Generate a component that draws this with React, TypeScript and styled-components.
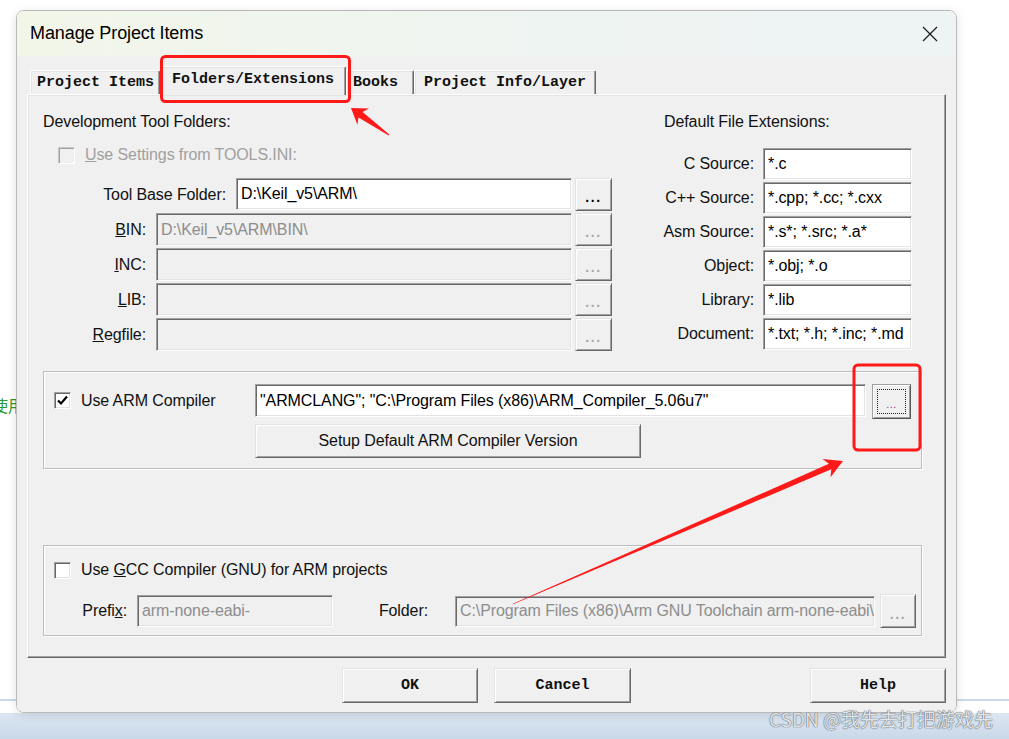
import React from "react";
import styled, { createGlobalStyle, css } from "styled-components";

const GlobalStyle = createGlobalStyle`
  html, body { margin: 0; padding: 0; background: #fff; }
  body { font-family: "Liberation Sans", Arial, sans-serif; }
  * { box-sizing: border-box; }
`;

const raised = css`
  border: 1px solid;
  border-color: #e3e3e3 #696969 #696969 #e3e3e3;
  box-shadow: inset 1px 1px 0 #fff, inset -1px -1px 0 #a0a0a0;
  background: #f0f0f0;
`;

const sunken = css`
  border: 1px solid;
  border-color: #a0a0a0 #fff #fff #a0a0a0;
  box-shadow: inset 1px 1px 0 #696969, inset -1px -1px 0 #e3e3e3;
`;

const uiFont = css`
  font-family: "Liberation Sans", Arial, sans-serif;
  font-size: 16px;
  letter-spacing: -0.1px;
  line-height: 20px;
`;

const Desktop = styled.div`
  position: relative;
  width: 1009px;
  height: 739px;
  overflow: hidden;
  display: flex;
  flex-direction: column;
  background: #fff;
`;

const Backdrop = styled.div`
  flex: 1;
  background: #fff;
`;

const BackEdge = styled.div`
  height: 2px;
  margin-bottom: 12px;
  background: #c9d8ea;
`;

const Taskbar = styled.div`
  height: 26px;
  background: linear-gradient(#dbe6f2, #c9d8e9);
`;

const StrayText = styled.span`
  position: absolute;
  left: -8px;
  top: 393px;
  font-family: "Noto Sans CJK SC", sans-serif;
  font-size: 16px;
  color: #2a9a2a;
`;

const Watermark = styled.div`
  position: absolute;
  right: 16px;
  top: 706px;
  z-index: 5;
  font-family: "Noto Sans CJK SC", "Liberation Sans", sans-serif;
  font-size: 19px;
  line-height: 26px;
  color: #e2e5e8;
  text-shadow: 0 0 1px #50555b, 0 0 1px #50555b;
`;

const Dialog = styled.div`
  position: absolute;
  left: 16px;
  top: 10px;
  width: 941px;
  height: 703px;
  z-index: 2;
  display: flex;
  flex-direction: column;
  border: 1px solid #b9b9b9;
  border-radius: 8px;
  overflow: hidden;
  box-shadow: 0 2px 10px rgba(0, 0, 0, 0.12);
`;

const TitleBar = styled.div`
  height: 45px;
  display: flex;
  align-items: center;
  padding-left: 13px;
  background: linear-gradient(90deg, #f2f6e9, #eef4f2 60%, #eef3f4);
`;

const Title = styled.div`
  flex: 1;
  font-family: "Liberation Sans", Arial, sans-serif;
  font-size: 18px;
  letter-spacing: -0.1px;
  color: #000;
`;

const CloseBtn = styled.div`
  width: 52px;
  height: 45px;
  display: flex;
  align-items: center;
  justify-content: center;
`;

const Body = styled.div`
  flex: 1;
  display: flex;
  flex-direction: column;
  background: #f0f0f0;
  padding: 10px 10px 0 10px;
`;

const TabStrip = styled.div`
  height: 28px;
  display: flex;
  align-items: flex-end;
  padding-left: 3px;
`;

const Tab = styled.div<{ $active?: boolean; $w: number; $pad: number }>`
  position: relative;
  width: ${(p) => p.$w}px;
  height: ${(p) => (p.$active ? 29 : 24)}px;
  margin-bottom: ${(p) => (p.$active ? -1 : 0)}px;
  z-index: ${(p) => (p.$active ? 1 : 0)};
  padding-left: ${(p) => p.$pad}px;
  padding-bottom: ${(p) => (p.$active ? 4 : 0)}px;
  display: flex;
  align-items: center;
  background: #f0f0f0;
  border-top: 1px solid #fff;
  border-left: 1px solid #fff;
  border-right: 1px solid #696969;
  border-top-left-radius: 2px;
  border-top-right-radius: 2px;
  box-shadow: inset -1px 0 0 #a0a0a0, inset 1px 1px 0 #e3e3e3;
  font-family: "Liberation Mono", "Courier New", monospace;
  font-weight: bold;
  font-size: 15px;
  color: #111;
  white-space: nowrap;
`;

const Panel = styled.div`
  height: 564px;
  border: 1px solid;
  border-color: #fff #696969 #696969 #fff;
  box-shadow: inset -1px -1px 0 #a0a0a0, inset 1px 1px 0 #e3e3e3;
  padding: 17px 0 0 15px;
`;

const TopGrid = styled.div`
  display: grid;
  grid-template-columns: 569px 248px;
  column-gap: 52px;
`;

const Column = styled.div`
  display: flex;
  flex-direction: column;
`;

const Heading = styled.div`
  ${uiFont};
  color: #111;
  height: 20px;
`;

const CheckRow = styled.label<{ $w?: number; $dim?: boolean }>`
  ${uiFont};
  display: flex;
  align-items: center;
  gap: 10px;
  width: ${(p) => (p.$w ? `${p.$w}px` : "auto")};
  color: ${(p) => (p.$dim ? "#a0a0a0" : "#111")};
`;

const Box = styled.span<{ $dim?: boolean }>`
  ${sunken};
  width: 17px;
  height: 17px;
  flex: none;
  display: flex;
  align-items: center;
  justify-content: center;
  background: ${(p) => (p.$dim ? "#f0f0f0" : "#fff")};
  ${(p) =>
    p.$dim &&
    css`
      border-color: #c8c8c8 #fff #fff #c8c8c8;
      box-shadow: inset 1px 1px 0 #a0a0a0;
    `}
`;

const FolderList = styled.div`
  margin: 13px 0 0 15px;
  display: flex;
  flex-direction: column;
  gap: 2px;
`;

const FolderRow = styled.div`
  height: 33px;
  display: flex;
  align-items: stretch;
`;

const Label = styled.div<{ $w: number }>`
  ${uiFont};
  width: ${(p) => p.$w}px;
  flex: none;
  margin-right: 10px;
  display: flex;
  align-items: center;
  justify-content: flex-end;
  color: #111;
  white-space: nowrap;
`;

const Field = styled.div<{ $disabled?: boolean; $w?: number; $h?: number }>`
  ${sunken};
  ${uiFont};
  ${(p) => (p.$w ? `width: ${p.$w}px; flex: none;` : "flex: 1;")}
  height: ${(p) => (p.$h ? `${p.$h}px` : "auto")};
  padding: 0 4px;
  display: flex;
  align-items: center;
  overflow: hidden;
  white-space: nowrap;
  background: ${(p) => (p.$disabled ? "#f0f0f0" : "#fff")};
  color: ${(p) => (p.$disabled ? "#8d8d8d" : "#000")};
`;

const DotsBtn = styled.div<{ $disabled?: boolean; $w?: number; $h?: number }>`
  ${raised};
  width: ${(p) => p.$w ?? 37}px;
  height: ${(p) => (p.$h ? `${p.$h}px` : "auto")};
  margin-left: ${(p) => (p.$w ? 5 : 3)}px;
  flex: none;
  display: flex;
  align-items: flex-end;
  justify-content: center;
  padding-bottom: 6px;
  font-family: "Liberation Sans", Arial, sans-serif;
  font-weight: bold;
  font-size: 14px;
  line-height: 14px;
  letter-spacing: 1.6px;
  color: ${(p) => (p.$disabled ? "#a8a8a8" : "#000")};
`;

const ExtList = styled.div`
  margin-top: 16px;
  display: flex;
  flex-direction: column;
  gap: 2px;
`;

const ExtRow = styled.div`
  height: 32px;
  display: grid;
  grid-template-columns: 90px 149px;
  column-gap: 9px;
`;

const ExtLabel = styled.div`
  ${uiFont};
  display: flex;
  align-items: center;
  justify-content: flex-end;
  color: #111;
  white-space: nowrap;
`;

const GroupBox = styled.div<{ $top: number; $h: number; $pt: number }>`
  width: 879px;
  height: ${(p) => p.$h}px;
  margin-top: ${(p) => p.$top}px;
  padding: ${(p) => p.$pt}px 0 0 10px;
  border: 1px solid #bdbdbd;
  box-shadow: inset 1px 1px 0 #fff, 1px 1px 0 #fff;
`;

const GroupRow = styled.div<{ $mt?: number; $pl?: number }>`
  display: flex;
  align-items: center;
  margin-top: ${(p) => p.$mt ?? 0}px;
  padding-left: ${(p) => p.$pl ?? 0}px;
`;

const FocusBtn = styled.div`
  ${raised};
  width: 39px;
  height: 35px;
  margin-left: 6px;
  align-self: flex-start;
  padding: 4px;
  border-color: #a0a0a0 #555 #555 #a0a0a0;
`;

const FocusRing = styled.div`
  width: 100%;
  height: 100%;
  border: 1px dotted #222;
  display: flex;
  align-items: flex-end;
  justify-content: center;
  padding-bottom: 3px;
  font-family: "Liberation Sans", Arial, sans-serif;
  font-size: 11px;
  line-height: 11px;
  color: #8a3aa0;
  letter-spacing: 0.5px;
`;

const PushBtn = styled.div<{ $w: number; $mono?: boolean; $ml?: number; $auto?: boolean }>`
  ${raised};
  width: ${(p) => p.$w}px;
  height: ${(p) => (p.$mono ? 35 : 34)}px;
  margin-left: ${(p) => (p.$auto ? "auto" : `${p.$ml ?? 0}px`)};
  display: flex;
  align-items: center;
  justify-content: center;
  color: #111;
  ${(p) =>
    p.$mono
      ? css`
          font-family: "Liberation Mono", "Courier New", monospace;
          font-weight: bold;
          font-size: 15px;
        `
      : uiFont}
`;

const Footer = styled.div`
  height: 54px;
  display: flex;
  align-items: flex-start;
  padding: 10px 0 0 315px;
  gap: 16px;
`;

const Overlay = styled.svg`
  position: absolute;
  left: 0;
  top: 0;
  z-index: 10;
  pointer-events: none;
`;

type Pt = [number, number];

// tapered arrow like the ones screenshot tools draw
function arrowPoints(tail: Pt, tip: Pt, head: number, half: number, neck: number, tailW: number) {
  const dx = tip[0] - tail[0];
  const dy = tip[1] - tail[1];
  const len = Math.hypot(dx, dy);
  const ux = dx / len;
  const uy = dy / len;
  const nx = -uy;
  const ny = ux;
  const base: Pt = [tip[0] - ux * head, tip[1] - uy * head];
  const nk: Pt = [tip[0] - ux * head * 0.78, tip[1] - uy * head * 0.78];
  const pts: Pt[] = [
    [tail[0] + nx * tailW, tail[1] + ny * tailW],
    [nk[0] + nx * neck, nk[1] + ny * neck],
    [base[0] + nx * half, base[1] + ny * half],
    tip,
    [base[0] - nx * half, base[1] - ny * half],
    [nk[0] - nx * neck, nk[1] - ny * neck],
    [tail[0] - nx * tailW, tail[1] - ny * tailW],
  ];
  return pts.map((p) => `${p[0].toFixed(1)},${p[1].toFixed(1)}`).join(" ");
}

const Check = () => (
  <svg width="11" height="11" viewBox="0 0 11 11">
    <path d="M1 5.5 L4 8.5 L10 1.5" fill="none" stroke="#000" strokeWidth="2.2" />
  </svg>
);

const folders = [
  { label: "Tool Base Folder:", u: "", rest: "", w: 168, value: "D:\\Keil_v5\\ARM\\", on: true },
  { label: "", u: "B", rest: "IN:", w: 88, value: "D:\\Keil_v5\\ARM\\BIN\\", on: false },
  { label: "", u: "I", rest: "NC:", w: 88, value: "", on: false },
  { label: "", u: "L", rest: "IB:", w: 88, value: "", on: false },
  { label: "", u: "R", rest: "egfile:", w: 88, value: "", on: false },
];

const extensions = [
  ["C Source:", "*.c"],
  ["C++ Source:", "*.cpp; *.cc; *.cxx"],
  ["Asm Source:", "*.s*; *.src; *.a*"],
  ["Object:", "*.obj; *.o"],
  ["Library:", "*.lib"],
  ["Document:", "*.txt; *.h; *.inc; *.md"],
];

export default function App() {
  return (
    <Desktop>
      <GlobalStyle />
      <Backdrop />
      <BackEdge />
      <Taskbar />
      <StrayText>使用</StrayText>

      <Dialog>
        <TitleBar>
          <Title>Manage Project Items</Title>
          <CloseBtn>
            <svg width="16" height="16" viewBox="0 0 16 16">
              <path d="M1 1 L15 15 M15 1 L1 15" stroke="#1a1a1a" strokeWidth="1.2" />
            </svg>
          </CloseBtn>
        </TitleBar>
        <Body>
          <TabStrip>
            <Tab $w={130} $pad={6}>Project Items</Tab>
            <Tab $w={186} $pad={11} $active>Folders/Extensions</Tab>
            <Tab $w={68} $pad={6}>Books</Tab>
            <Tab $w={182} $pad={9}>Project Info/Layer</Tab>
          </TabStrip>
          <Panel>
            <TopGrid>
              <Column>
                <Heading>Development Tool Folders:</Heading>
                <CheckRow $dim style={{ margin: "13px 0 0 15px" }}>
                  <Box $dim />
                  <span><u>U</u>se Settings from TOOLS.INI:</span>
                </CheckRow>
                <FolderList>
                  {folders.map((f, i) => (
                    <FolderRow key={i}>
                      <Label $w={f.w}>
                        {f.label}
                        {f.u && <u>{f.u}</u>}
                        {f.rest}
                      </Label>
                      <Field $disabled={!f.on} $h={i === 0 ? 32 : 33}>{f.value}</Field>
                      <DotsBtn $disabled={!f.on}>...</DotsBtn>
                    </FolderRow>
                  ))}
                </FolderList>
              </Column>
              <Column>
                <Heading>Default File Extensions:</Heading>
                <ExtList>
                  {extensions.map(([l, v]) => (
                    <ExtRow key={l}>
                      <ExtLabel>{l}</ExtLabel>
                      <Field>{v}</Field>
                    </ExtRow>
                  ))}
                </ExtList>
              </Column>
            </TopGrid>

            <GroupBox $top={20} $h={98} $pt={12}>
              <GroupRow style={{ alignItems: "flex-start" }}>
                <CheckRow $w={201} style={{ height: 33 }}>
                  <Box><Check /></Box>
                  <span>Use ARM Compiler</span>
                </CheckRow>
                <Field $w={611} $h={33}>"ARMCLANG"; "C:\Program Files (x86)\ARM_Compiler_5.06u7"</Field>
                <FocusBtn>
                  <FocusRing>...</FocusRing>
                </FocusBtn>
              </GroupRow>
              <GroupRow $mt={5} $pl={201}>
                <PushBtn $w={386}>Setup Default ARM Compiler Version</PushBtn>
              </GroupRow>
            </GroupBox>

            <GroupBox $top={76} $h={91} $pt={14}>
              <CheckRow style={{ height: 20 }}>
                <Box />
                <span>Use <u>G</u>CC Compiler (GNU) for ARM projects</span>
              </CheckRow>
              <GroupRow $mt={14} $pl={31} style={{ height: 34 }}>
                <Label $w={42}>Prefi<u>x</u>:</Label>
                <Field $disabled $w={196} $h={32}>arm-none-eabi-</Field>
                <Label $w={46} style={{ marginLeft: 49, marginRight: 27 }}>Folder:</Label>
                <Field $disabled $w={420} $h={31}>C:\Program Files (x86)\Arm GNU Toolchain arm-none-eabi\</Field>
                <DotsBtn $disabled $w={36} $h={34}>...</DotsBtn>
              </GroupRow>
            </GroupBox>
          </Panel>
          <Footer>
            <PushBtn $w={136} $mono>OK</PushBtn>
            <PushBtn $w={137} $mono>Cancel</PushBtn>
            <PushBtn $w={136} $mono $auto>Help</PushBtn>
          </Footer>
        </Body>
      </Dialog>

      <Overlay width="1009" height="739" viewBox="0 0 1009 739">
        <rect x="161.5" y="56.5" width="188" height="45" rx="4" fill="none" stroke="#ff1a1a" strokeWidth="3" />
        <rect x="854" y="365" width="66" height="85" rx="4" fill="none" stroke="#ff1a1a" strokeWidth="3" />
        <polygon points={arrowPoints([389, 135], [351, 108], 15, 10, 3.5, 0.6)} fill="#ff1a1a" />
        <polygon points={arrowPoints([513, 604], [843, 461], 18, 10, 3, 0.3)} fill="#ff1a1a" />
      </Overlay>

      <Watermark>CSDN @我先去打把游戏先</Watermark>
    </Desktop>
  );
}
